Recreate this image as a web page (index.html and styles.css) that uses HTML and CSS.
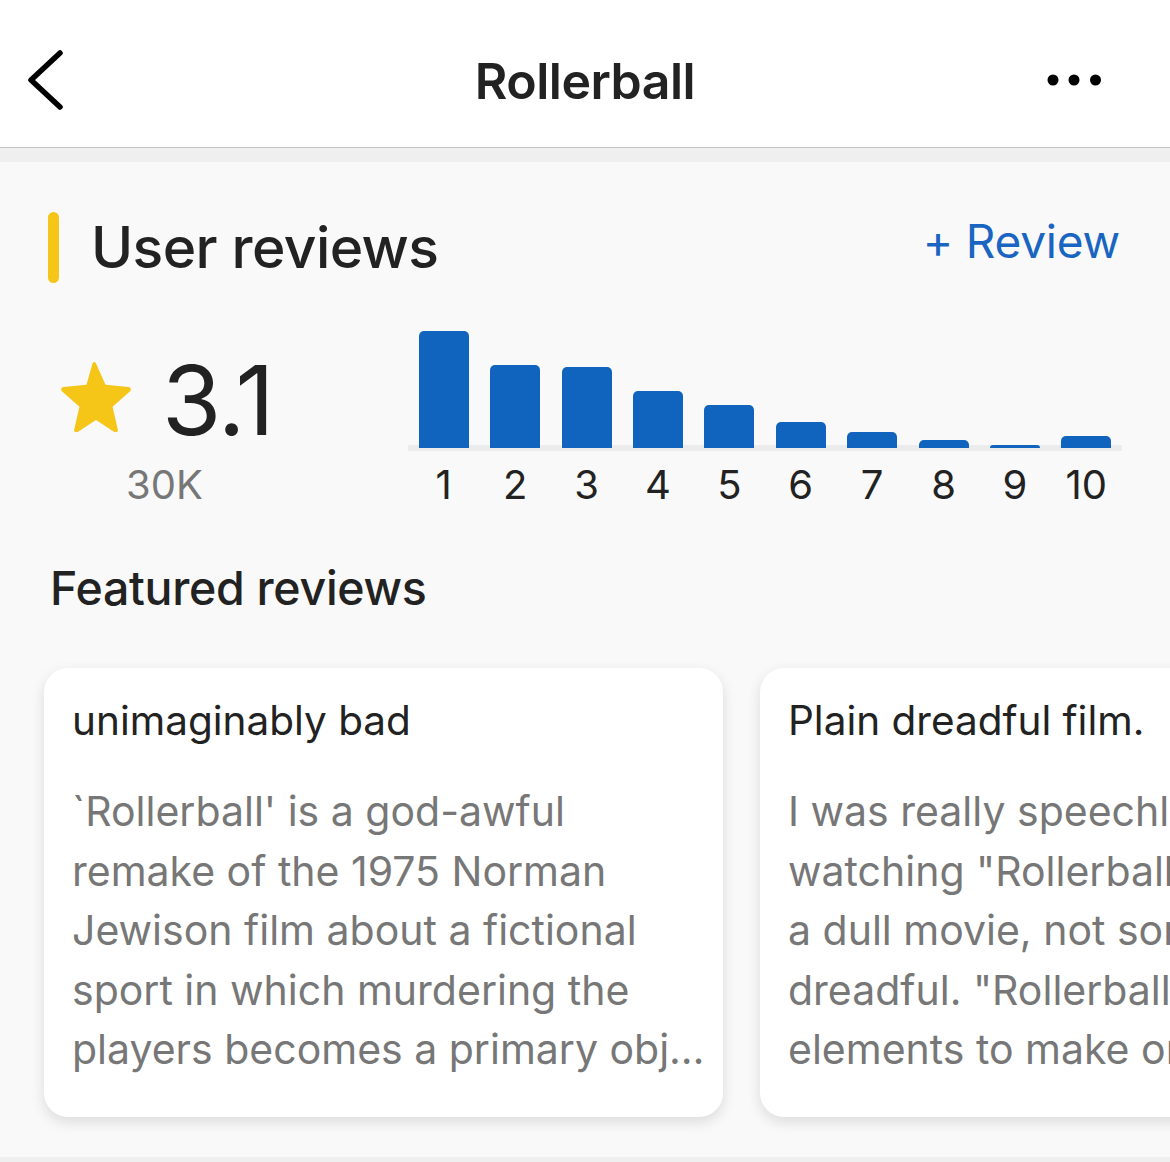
FILE: index.html
```html
<!DOCTYPE html>
<html lang="en">
<head>
<meta charset="utf-8">
<title>Rollerball</title>
<link rel="stylesheet" href="styles.css">
</head>
<body>
<div class="page">
  <header class="topbar">
    <svg class="back" width="44" height="64" viewBox="0 0 44 64"><polyline points="39,5 10,32 39,59" fill="none" stroke="#000" stroke-width="5.5" stroke-linecap="round" stroke-linejoin="round"/></svg>
    <h1 class="title">Rollerball</h1>
    <svg class="more" width="60" height="16" viewBox="0 0 60 16"><circle cx="8" cy="8" r="5.5"/><circle cx="29" cy="8" r="5.5"/><circle cx="50.5" cy="8" r="5.5"/></svg>
  </header>
  <div class="band"></div>
  <main class="content">
    <div class="sec-head">
      <div class="sec-title"><span class="accent"></span><span class="sec-text">User reviews</span></div>
      <span class="add-review">+ Review</span>
    </div>
    <div class="rating-row">
      <div class="score">
        <div class="score-top">
          <svg class="star" width="72" height="70" viewBox="1.9 2.2 20.2 19.9"><path d="M12 2.6l2.7 6.1 6.6.6c.6.1.8.8.4 1.2l-5 4.4 1.5 6.5c.1.6-.5 1-1 .7L12 18.7l-5.2 3.4c-.5.3-1.1-.1-1-.7l1.5-6.5-5-4.4c-.4-.4-.2-1.1.4-1.2l6.6-.6L11 2.6c.3-.5.8-.5 1 0z" fill="#f5c518"/></svg>
          <span class="score-num">3.1</span>
        </div>
        <div class="score-count">30K</div>
      </div>
      <div class="chart">
        <div class="bars">
          <div class="col"><div class="bar" style="height:117px"></div></div>
          <div class="col"><div class="bar" style="height:83px"></div></div>
          <div class="col"><div class="bar" style="height:81px"></div></div>
          <div class="col"><div class="bar" style="height:57px"></div></div>
          <div class="col"><div class="bar" style="height:43px"></div></div>
          <div class="col"><div class="bar" style="height:26px"></div></div>
          <div class="col"><div class="bar" style="height:16px"></div></div>
          <div class="col"><div class="bar" style="height:8px"></div></div>
          <div class="col"><div class="bar" style="height:3px"></div></div>
          <div class="col"><div class="bar" style="height:12px"></div></div>
        </div>
        <div class="labels">
          <span>1</span><span>2</span><span>3</span><span>4</span><span>5</span><span>6</span><span>7</span><span>8</span><span>9</span><span>10</span>
        </div>
      </div>
    </div>
    <h2 class="featured">Featured reviews</h2>
    <div class="cards">
      <article class="card">
        <h3 class="card-title">unimaginably bad</h3>
        <p class="card-body">`Rollerball' is a god-awful remake of the 1975 Norman Jewison film about a fictional sport in which murdering the players becomes a primary obj…</p>
      </article>
      <article class="card">
        <h3 class="card-title">Plain dreadful film.</h3>
        <p class="card-body">I was really speechless after<br>watching "Rollerball". It's not<br>a dull movie, not something<br>dreadful. "Rollerball" has all<br>elements to make one of the…</p>
      </article>
    </div>
  </main>
  <div class="band bottom"></div>
</div>
</body>
</html>
```

FILE: styles.css
```css
* { box-sizing: border-box; }
html, body { margin: 0; padding: 0; }
body {
  font-family: Inter, "Noto Sans", "Liberation Sans", sans-serif;
  background: #f9f9f9;
  color: #222;
  width: 1170px;
  height: 1162px;
  overflow: hidden;
}
.page { display: flex; flex-direction: column; height: 1162px; }

.topbar {
  height: 148px;
  background: #fff;
  border-bottom: 1px solid #c4c4c4;
  display: flex;
  align-items: center;
  justify-content: space-between;
  padding: 0 65px 0 21px;
  position: relative;
}
.back { display: block; margin-top: 12px; }
.more { display: block; fill: #000; margin-top: 12px; }
.title {
  position: absolute;
  left: 0; right: 0;
  text-align: center;
  margin: 0;
  font-size: 50px;
  font-weight: 600;
  color: #222;
  letter-spacing: -0.5px;
  line-height: 60px;
  top: 51px;
  pointer-events: none;
}

.band { height: 14px; background: #efefef; flex: none; }
.band.bottom { height: 5px; margin-top: auto; }

.content { flex: 1; padding: 50px 0 0 0; overflow: hidden; }

.sec-head {
  display: flex;
  justify-content: space-between;
  align-items: center;
  padding: 0 50px 0 48px;
  height: 71px;
}
.sec-title { display: flex; align-items: center; gap: 32px; height: 71px; }
.accent { width: 11px; height: 71px; border-radius: 6px; background: #f5c518; }
.sec-text { font-size: 57px; font-weight: 500; letter-spacing: -0.6px; line-height: 70px; }
.add-review { font-size: 46px; color: #1a64c2; line-height: 50px; margin-top: -14px; letter-spacing: -0.2px; }

.rating-row { display: flex; margin-top: 48px; padding-left: 60px; }
.score { width: 228px; display: flex; flex-direction: column; }
.score-top { height: 120px; display: flex; align-items: center; padding-top: 18px; gap: 30px; }
.star { display: block; margin-top: -6px; }
.score-num { font-size: 96px; line-height: 96px; font-weight: 400; letter-spacing: -1.5px; color: #222; }
.score-count { margin-top: 10px; font-size: 40px; line-height: 48px; color: #777; padding-left: 66px; }

.chart { margin-left: 120px; width: 714px; }
.bars {
  height: 120px;
  display: flex;
  align-items: flex-end;
  padding-bottom: 3px;
  background: linear-gradient(to top, #ececec 6px, transparent 6px);
}
.col { flex: 1; display: flex; justify-content: center; align-items: flex-end; height: 100%; }
.bar { width: 50px; background: #1164be; border-radius: 5px 5px 0 0; }
.labels { display: flex; margin-top: 10px; }
.labels span { flex: 1; text-align: center; font-size: 40px; line-height: 48px; color: #222; }

.featured { margin: 51px 0 0 50px; font-size: 46.5px; font-weight: 500; line-height: 56px; letter-spacing: -0.3px; }

.cards { display: flex; gap: 37px; margin-top: 52px; padding-left: 44px; }
.card {
  flex: none;
  width: 679px;
  height: 449px;
  background: #fff;
  border-radius: 24px;
  box-shadow: 0 5px 14px rgba(0,0,0,0.12);
  padding: 29px 16px 0 28px;
}
.card-title { margin: 0; font-size: 40.5px; font-weight: 400; line-height: 48px; color: #222; }
.card-body {
  margin: 37px 0 0 0;
  font-size: 41px;
  line-height: 59.5px;
  color: #777;
  white-space: normal;
  overflow: hidden;
  max-height: 298px;
}
.card + .card .card-body { white-space: nowrap; }
```
